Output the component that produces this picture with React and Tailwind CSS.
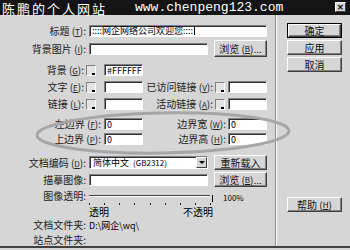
import React from "react";

const F = "font-['Noto_Sans_CJK_SC','Noto_Sans',sans-serif]";

function Input({ className = "", children }) {
  return (
    <div
      className={`h-[12px] bg-white border border-t-[#808080] border-l-[#808080] border-r-white border-b-white shadow-[inset_1px_1px_0_#303030] flex items-center pl-[2px] text-[9px] leading-none text-black overflow-hidden whitespace-nowrap shrink-0 ${className}`}
    >
      {children}
    </div>
  );
}

function Btn({ className = "", def = false, children }) {
  return (
    <div
      className={`flex items-center justify-center shrink-0 text-[10px] leading-none text-[#111] ${
        def ? "border border-black" : ""
      } ${className}`}
    >
      <div className="w-full h-full flex items-center justify-center border border-t-white border-l-white border-r-[#404040] border-b-[#404040] shadow-[inset_-1px_-1px_0_#808080]">
        {children}
      </div>
    </div>
  );
}

function Swatch() {
  return (
    <div className="relative w-[10px] h-[11px] shrink-0 border border-t-[#808080] border-l-[#808080] border-r-white border-b-white bg-[#e4e4e4]">
      <div className="absolute right-[0px] bottom-[0px] w-[3px] h-[2px] bg-black"></div>
    </div>
  );
}

function Label({ className = "", children }) {
  return (
    <span className={`text-right shrink-0 text-[10px] leading-none text-[#222] whitespace-nowrap ${className}`}>
      {children}
    </span>
  );
}

function K({ children }) {
  return <span className="text-[8px] underline underline-offset-1">{children}</span>;
}

export default function App() {
  const ticks = [0, 1, 2, 3, 4, 5, 6, 7, 8];
  return (
    <div className={`relative w-[350px] h-[250px] overflow-hidden bg-[#d6d6d6] ${F}`}>
      {/* title bar */}
      <div className="h-[15px] bg-[#141414] flex items-start relative pl-[2px]">
        <span className="h-[15px] text-white text-[13px] leading-[18px] tracking-[2px] whitespace-nowrap">陈鹏的个人网站</span>
        <span className="h-[15px] ml-[28px] text-white text-[13px] leading-[16px] font-['Liberation_Mono',monospace] whitespace-nowrap">
          www.chenpeng123.com
        </span>
        <div className="absolute right-[4px] top-[2px] w-[11px] h-[10px] bg-[#d6d6d6] border border-t-white border-l-white border-r-[#404040] border-b-[#404040] flex items-center justify-center text-[8px] leading-none text-black font-bold">
          ✕
        </div>
      </div>

      {/* body */}
      <div className="flex h-[233px] border-b-2 border-b-[#404040]">
        {/* left */}
        <div className="w-[276px] h-full border-r border-r-[#8c8c8c] flex flex-col">
          {/* R1 */}
          <div className="mt-[9px] h-[14px] flex items-center gap-[3px]">
            <Label className="w-[86px]">标题 (<K>T</K>):</Label>
            <Input className="w-[178px] text-[8.5px]">
              <span>::::网企网络公司欢迎您::::</span>
              <span className="w-px h-[9px] bg-black ml-[1px]"></span>
            </Input>
          </div>
          {/* R2 */}
          <div className="mt-[3px] h-[17px] flex items-center gap-[3px]">
            <Label className="w-[86px]">背景图片 (<K>I</K>):</Label>
            <Input className="w-[119px]" />
            <Btn className="ml-[3px] w-[53px] h-[17px]">浏览 (<K>B</K>)...</Btn>
          </div>
          {/* R3 */}
          <div className="mt-[7px] h-[12px] flex items-center">
            <Label className="w-[84px]">背景 (<K>G</K>):</Label>
            <span className="ml-[2px]"><Swatch /></span>
            <Input className="ml-[8px] w-[39px] text-[8px]">#FFFFFF</Input>
          </div>
          {/* R4 */}
          <div className="mt-[5px] h-[12px] flex items-center">
            <Label className="w-[84px]">文字 (<K>E</K>):</Label>
            <span className="ml-[2px]"><Swatch /></span>
            <Input className="ml-[8px] w-[39px]" />
            <Label className="w-[70px]">已访问链接 (<K>V</K>):</Label>
            <span className="ml-[2px]"><Swatch /></span>
            <Input className="ml-[3px] w-[39px]" />
          </div>
          {/* R5 */}
          <div className="mt-[5px] h-[12px] flex items-center">
            <Label className="w-[84px]">链接 (<K>L</K>):</Label>
            <span className="ml-[2px]"><Swatch /></span>
            <Input className="ml-[8px] w-[39px]" />
            <Label className="w-[70px]">活动链接 (<K>A</K>):</Label>
            <span className="ml-[2px]"><Swatch /></span>
            <Input className="ml-[3px] w-[39px]" />
          </div>
          {/* R6 */}
          <div className="mt-[8px] h-[12px] flex items-center">
            <Label className="w-[101px]">左边界 (<K>F</K>):</Label>
            <Input className="ml-[3px] w-[39px]">0</Input>
            <Label className="w-[83px]">边界宽 (<K>W</K>):</Label>
            <Input className="ml-[2px] w-[39px]">0</Input>
          </div>
          {/* R7 */}
          <div className="mt-[3px] h-[12px] flex items-center">
            <Label className="w-[101px]">上边界 (<K>P</K>):</Label>
            <Input className="ml-[3px] w-[39px]">0</Input>
            <Label className="w-[83px]">边界高 (<K>H</K>):</Label>
            <Input className="ml-[2px] w-[39px]">0</Input>
          </div>
          {/* R8 */}
          <div className="mt-[10px] h-[15px] flex items-center gap-[3px]">
            <Label className="w-[86px]">文档编码 (<K>D</K>):</Label>
            <div className="relative w-[119px] h-[13px] shrink-0 bg-white border border-t-[#808080] border-l-[#808080] border-r-white border-b-white shadow-[inset_1px_1px_0_#303030] flex items-center pl-[3px] text-[9px] leading-none text-black whitespace-nowrap">
              简体中文 <span className="ml-[4px] text-[8px]">(GB2312)</span>
              <div className="absolute right-0 top-0 w-[11px] h-[11px] bg-[#d6d6d6] border border-t-white border-l-white border-r-[#404040] border-b-[#404040] flex items-center justify-center">
                <div className="w-0 h-0 border-l-[3px] border-r-[3px] border-t-[3px] border-l-transparent border-r-transparent border-t-black"></div>
              </div>
            </div>
            <Btn className="ml-[3px] w-[53px] h-[15px]">重新载入</Btn>
          </div>
          {/* R9 */}
          <div className="mt-[2px] h-[15px] flex items-center gap-[3px]">
            <Label className="w-[86px]">描摹图像:</Label>
            <Input className="w-[119px]" />
            <Btn className="ml-[3px] w-[53px] h-[15px]">浏览 (<K>B</K>)...</Btn>
          </div>
          {/* R10 slider */}
          <div className="mt-[3px] h-[12px] flex items-center gap-[3px]">
            <Label className="w-[86px]">图像透明:</Label>
            <div className="w-[121px] h-[2px] border-t border-t-[#404040] border-b border-b-white shrink-0"></div>
            <div className="w-px h-[7px] bg-black -ml-[1px] mt-[5px] shrink-0"></div>
            <span className="ml-[7px] text-[8px] leading-none text-black mt-[4px]">100%</span>
          </div>
          {/* R11 ticks */}
          <div className="h-[14px] flex flex-col pl-[89px]">
            <div className="w-[122px] flex justify-between mt-[1px]">
              {ticks.map((t) => (
                <div key={t} className="w-px h-[2px] bg-[#222]"></div>
              ))}
            </div>
            <div className="w-[124px] flex justify-between items-end mt-[2px]">
              <span className="text-[10px] leading-none text-black">透明</span>
              <span className="text-[10px] leading-none text-black">不透明</span>
            </div>
          </div>
          {/* R12 */}
          <div className="mt-[3px] h-[13px] flex items-center gap-[3px]">
            <Label className="w-[86px]">文档文件夹:</Label>
            <span className="text-[9px] leading-none text-black">D:\网企\wq\</span>
          </div>
          {/* R13 */}
          <div className="mt-[2px] h-[13px] flex items-center gap-[3px]">
            <Label className="w-[86px]">站点文件夹:</Label>
          </div>
        </div>

        {/* right */}
        <div className="flex-1 h-full border-l border-l-white flex flex-col pl-[10px]">
          <Btn def className="mt-[8px] w-[55px] h-[15px]">确定</Btn>
          <Btn className="mt-[2px] w-[55px] h-[15px]">应用</Btn>
          <Btn className="mt-[2px] w-[55px] h-[15px]">取消</Btn>
          <Btn className="mt-[125px] w-[55px] h-[15px]">帮助 (<K>H</K>)</Btn>
        </div>
      </div>

      {/* hand-drawn ellipse highlight */}
      <svg className="absolute left-0 top-0 pointer-events-none" width="350" height="250">
        <ellipse
          cx="163"
          cy="133"
          rx="126"
          ry="20"
          fill="none"
          stroke="#a6a6a6"
          strokeWidth="3"
          transform="rotate(-1 163 133)"
        />
      </svg>
    </div>
  );
}
